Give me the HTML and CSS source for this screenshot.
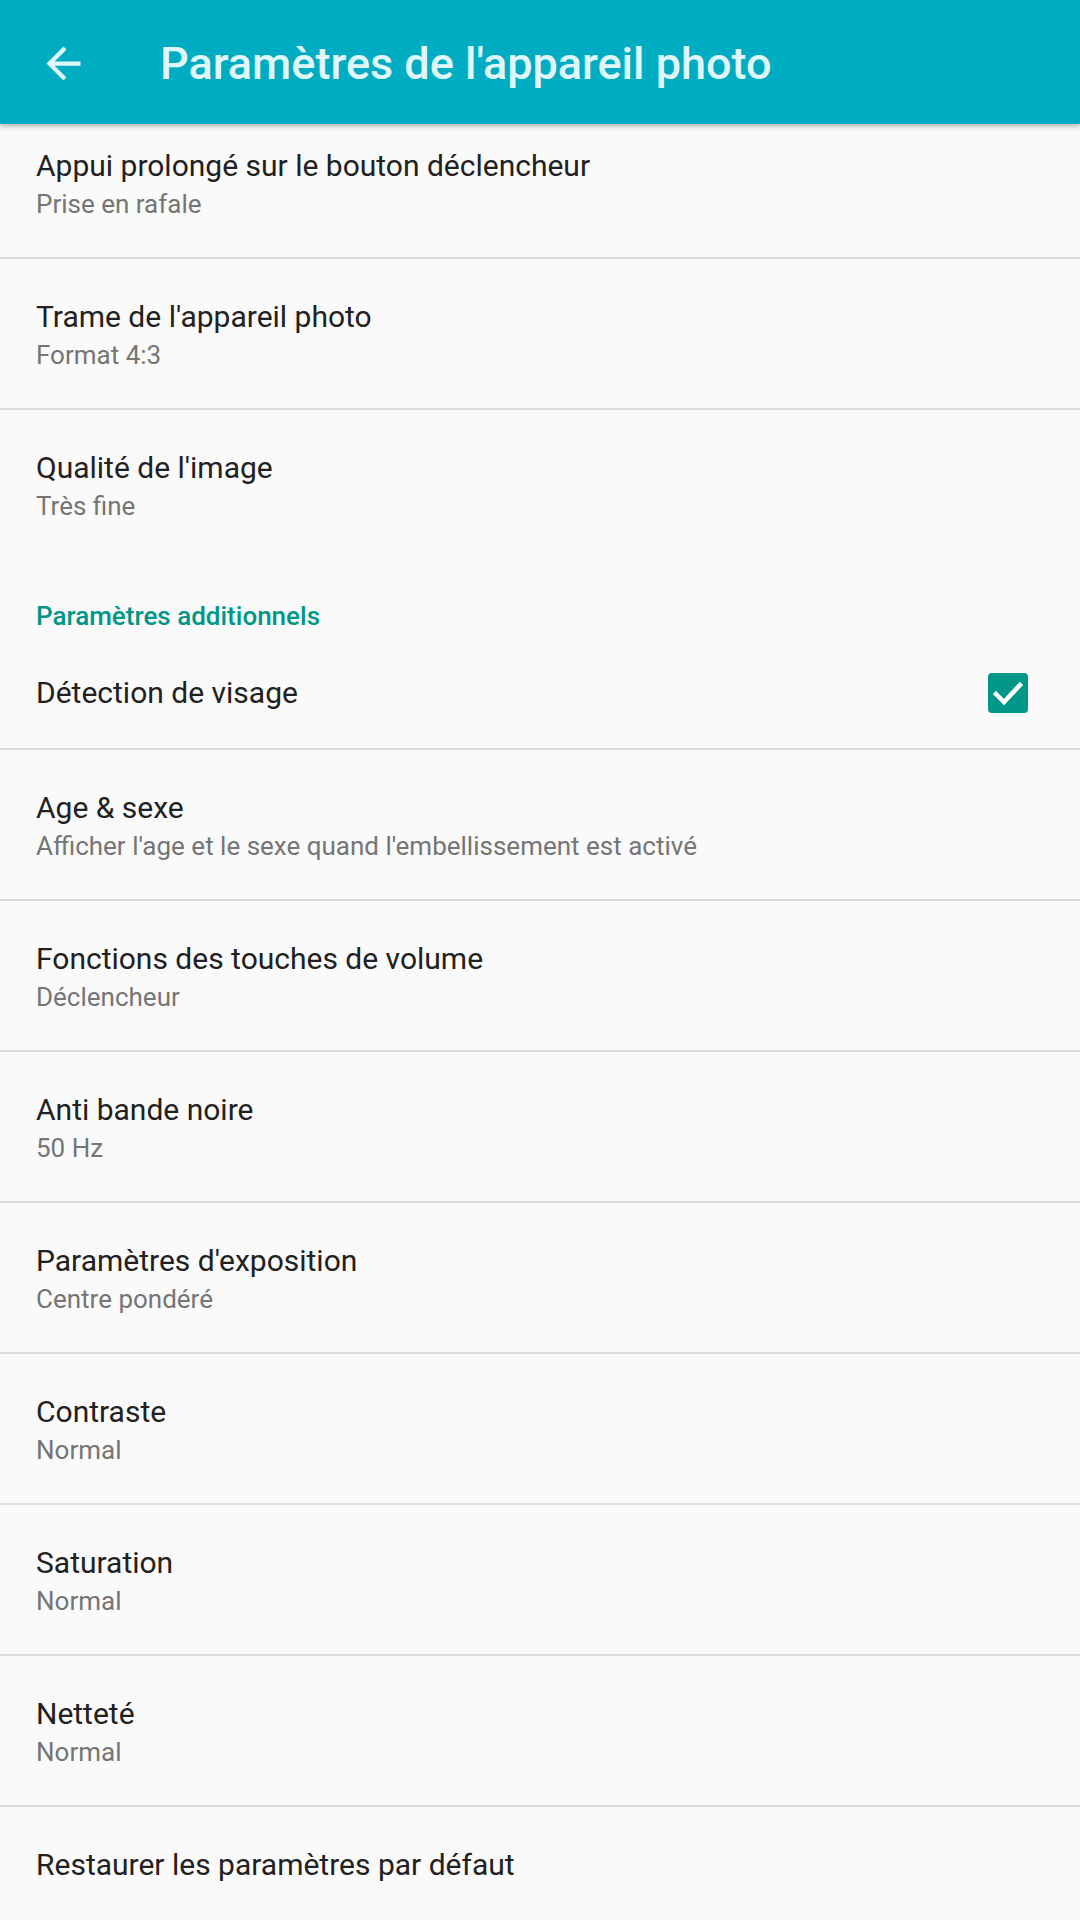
FILE: index.html
```html
<!DOCTYPE html>
<html lang="fr">
<head>
<meta charset="utf-8">
<title>Paramètres de l'appareil photo</title>
<link rel="stylesheet" href="styles.css">
</head>
<body>
<div class="screen">
  <header class="appbar">
    <span class="back">
      <svg viewBox="0 0 24 24" width="51" height="51"><path fill="#E0F7FA" d="M20 11H7.83l5.59-5.59L12 4l-8 8 8 8 1.41-1.41L7.83 13H20v-2z"/></svg>
    </span>
    <h1 class="appbar-title">Paramètres de l'appareil photo</h1>
  </header>
  <main class="list">
    <div class="row two divided">
      <div class="title">Appui prolongé sur le bouton déclencheur</div>
      <div class="summary">Prise en rafale</div>
    </div>
    <div class="row two divided">
      <div class="title">Trame de l'appareil photo</div>
      <div class="summary">Format 4:3</div>
    </div>
    <div class="row two">
      <div class="title">Qualité de l'image</div>
      <div class="summary">Très fine</div>
    </div>
    <div class="category">Paramètres additionnels</div>
    <div class="row one divided with-widget">
      <div class="title">Détection de visage</div>
      <span class="checkbox">
        <svg viewBox="0 0 40 40" width="40" height="40"><rect x="0" y="0" width="40" height="40" rx="4" fill="#009688"/><path d="M8 21l8 8L32 12" fill="none" stroke="#fff" stroke-width="4.5" stroke-linecap="square"/></svg>
      </span>
    </div>
    <div class="row two divided">
      <div class="title">Age &amp; sexe</div>
      <div class="summary">Afficher l'age et le sexe quand l'embellissement est activé</div>
    </div>
    <div class="row two divided">
      <div class="title">Fonctions des touches de volume</div>
      <div class="summary">Déclencheur</div>
    </div>
    <div class="row two divided">
      <div class="title">Anti bande noire</div>
      <div class="summary">50 Hz</div>
    </div>
    <div class="row two divided">
      <div class="title">Paramètres d'exposition</div>
      <div class="summary">Centre pondéré</div>
    </div>
    <div class="row two divided">
      <div class="title">Contraste</div>
      <div class="summary">Normal</div>
    </div>
    <div class="row two divided">
      <div class="title">Saturation</div>
      <div class="summary">Normal</div>
    </div>
    <div class="row two divided">
      <div class="title">Netteté</div>
      <div class="summary">Normal</div>
    </div>
    <div class="row one">
      <div class="title">Restaurer les paramètres par défaut</div>
    </div>
  </main>
</div>
</body>
</html>
```

FILE: styles.css
```css
html, body {
  margin: 0;
  padding: 0;
  background: #fafafa;
}
body {
  font-family: Roboto, "Noto Sans", sans-serif;
  width: 1080px;
  height: 1920px;
  overflow: hidden;
}
.screen {
  width: 1080px;
  height: 1920px;
  overflow: hidden;
  background: #fafafa;
}
.appbar {
  position: relative;
  z-index: 2;
  height: 124px;
  background: #00acc1;
  display: flex;
  align-items: center;
  box-shadow: 0 2px 4px rgba(0,0,0,0.22), 0 4px 8px rgba(0,0,0,0.08);
}
.back {
  width: 51px;
  height: 51px;
  margin-left: 38px;
  margin-top: 3px;
  display: flex;
}
.appbar-title {
  margin: 0 0 0 71px;
  font-size: 45px;
  font-weight: 500;
  color: #e0f7fa;
  line-height: 1;
  padding-top: 2px;
  letter-spacing: 0;
}
.list {
  margin-top: -16px;
  position: relative;
  z-index: 1;
}
.row {
  box-sizing: border-box;
  padding: 38px 36px 35px;
}
.row.divided {
  border-bottom: 2px solid #dadada;
}
.row.with-widget {
  display: flex;
  align-items: center;
  justify-content: space-between;
  padding-right: 52px;
}
.title {
  font-size: 30px;
  line-height: 40px;
  color: #212121;
}
.summary {
  font-size: 26px;
  line-height: 36px;
  color: #757575;
}
.checkbox {
  width: 40px;
  height: 40px;
  display: flex;
}
.category {
  padding: 40px 36px 2px;
  font-size: 26px;
  line-height: 34px;
  font-weight: 500;
  color: #009688;
}
```
